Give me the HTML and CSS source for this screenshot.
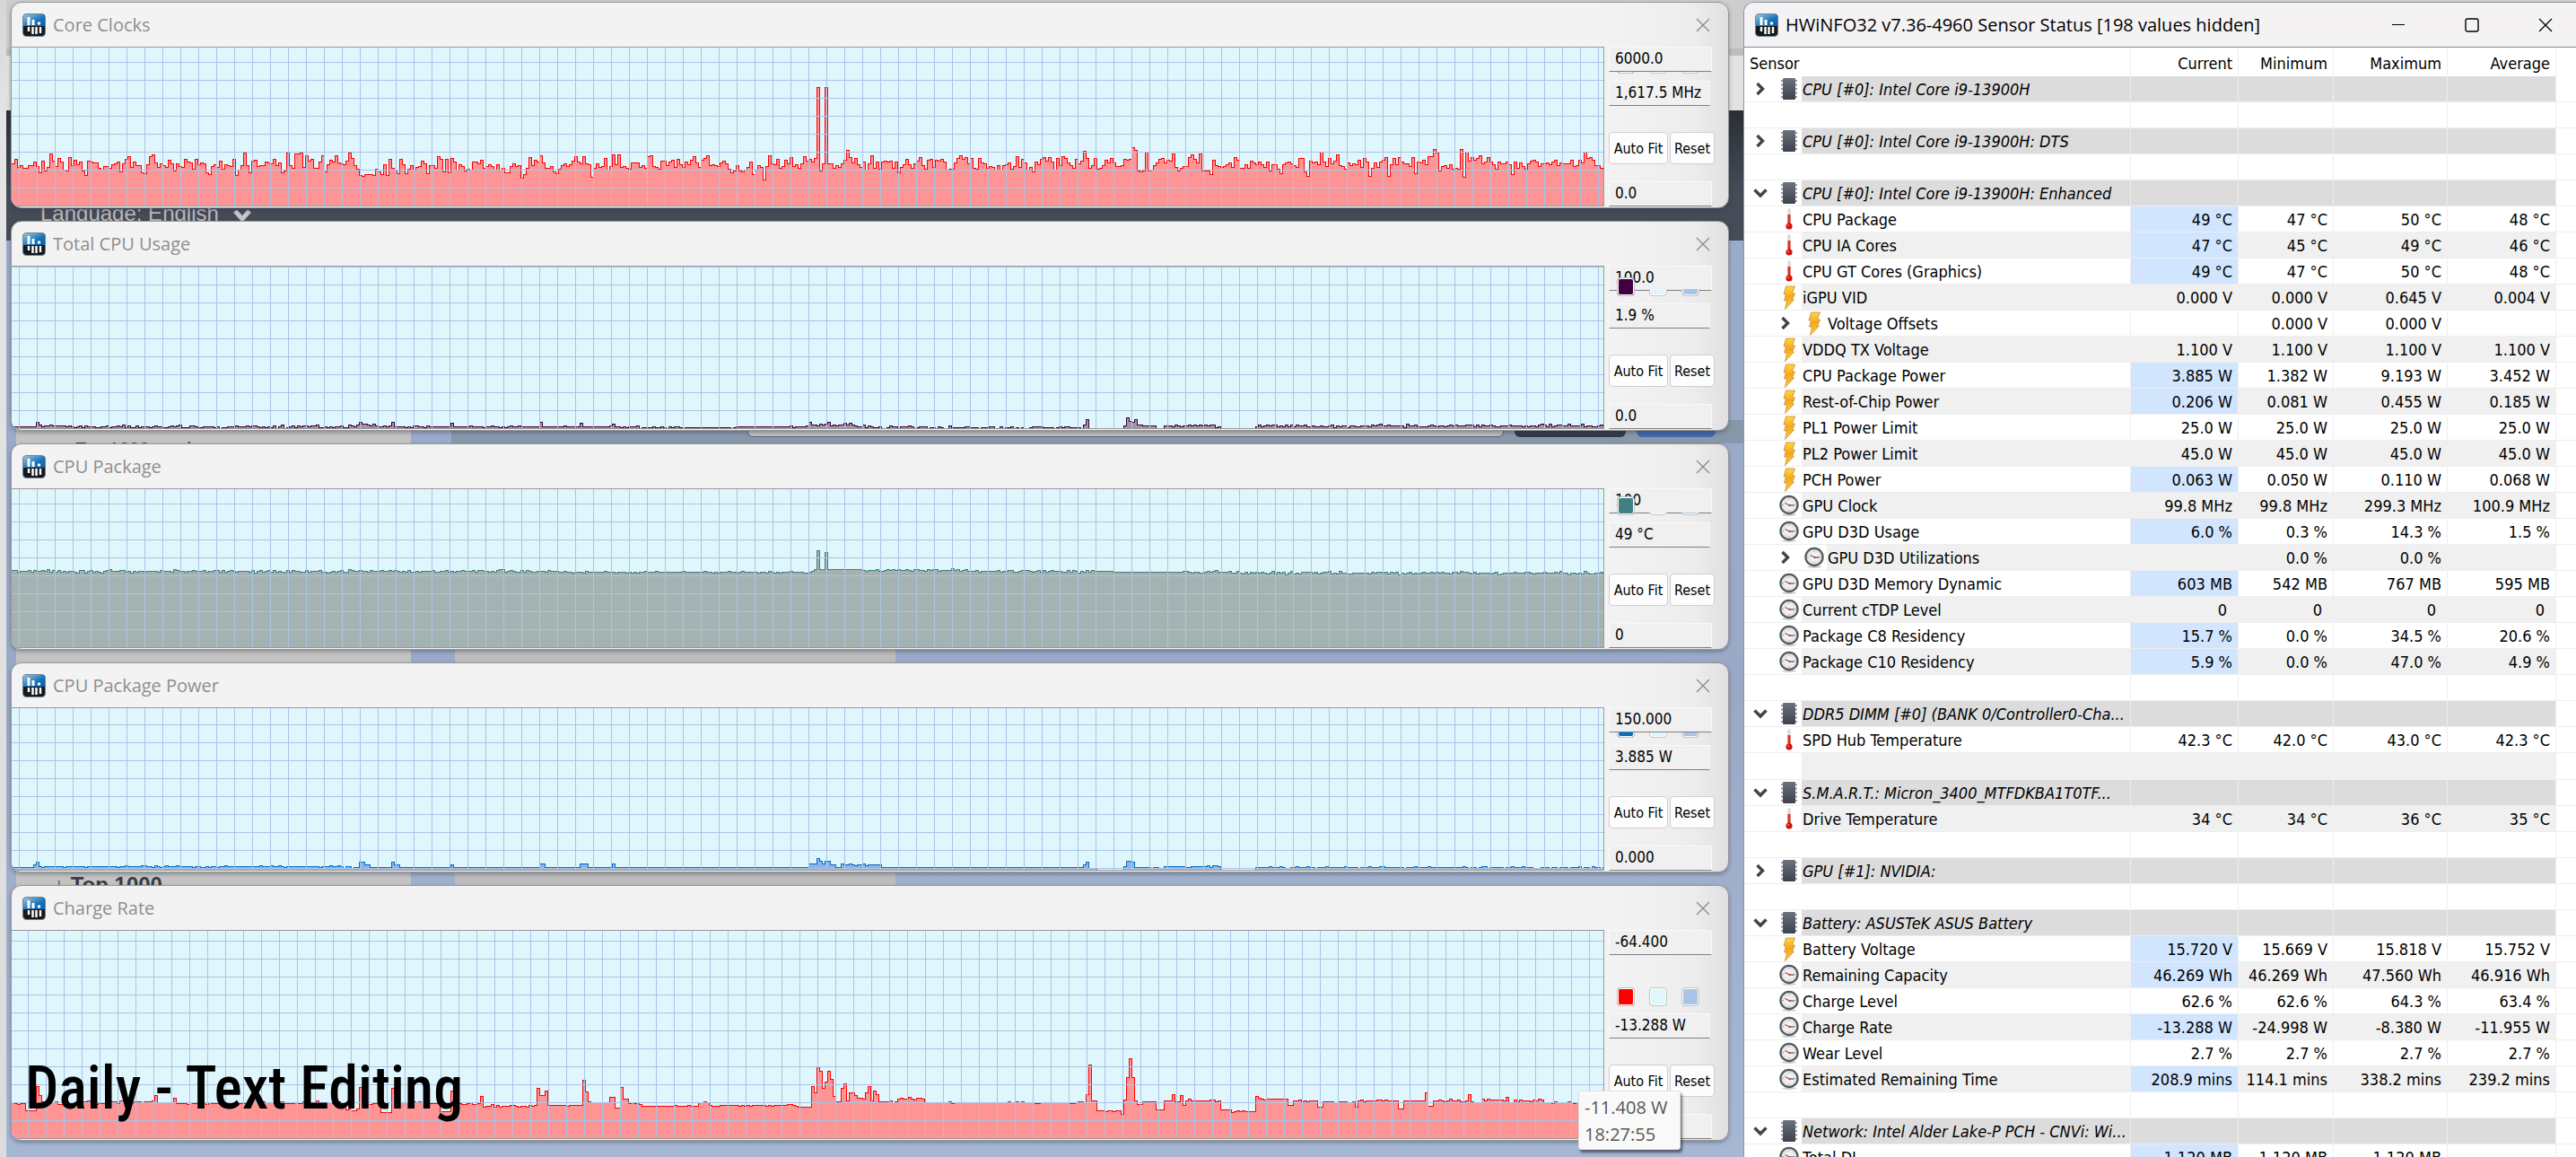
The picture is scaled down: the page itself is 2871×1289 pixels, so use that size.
FILE: index.html
```html
<!DOCTYPE html>
<html lang="en">
<head>
<meta charset="utf-8">
<title>HWiNFO32 Sensor Status</title>
<link rel="stylesheet" href="styles.css">
</head>
<body>
<svg class="sprite" aria-hidden="true">
  <defs>
    <linearGradient id="g-app" x1="0" y1="0" x2="1" y2="1"><stop offset="0" stop-color="#9fc6dc"/><stop offset=".6" stop-color="#1673bb"/><stop offset="1" stop-color="#0d5ea6"/></linearGradient>
    <linearGradient id="g-chip" x1="0" y1="0" x2="0" y2="1"><stop offset="0" stop-color="#6d737c"/><stop offset="1" stop-color="#3b424e"/></linearGradient>
    <linearGradient id="g-bolt" x1="0" y1="0" x2="0" y2="1"><stop offset="0" stop-color="#ffd83c"/><stop offset=".45" stop-color="#f5a71e"/><stop offset="1" stop-color="#ffd23a"/></linearGradient>
    <radialGradient id="g-clock"><stop offset="0" stop-color="#ffffff"/><stop offset="1" stop-color="#dcdcdc"/></radialGradient>
  </defs>
  <symbol id="app" viewBox="0 0 26 26">
    <rect x=".5" y=".5" width="25" height="25" rx="4" fill="#16181c" stroke="#6d8796"/>
    <path d="M1 14V4a3 3 0 0 1 3-3h18a3 3 0 0 1 3 3v10z" fill="url(#g-app)"/>
    <path d="M7 4v9M12 7v6" stroke="#fff" stroke-width="3"/>
    <circle cx="18.500" cy="11" r="1.800" fill="#fff"/>
    <path d="M7 15v5M11.500 15v8M15.500 15v8M20 15v7" stroke="#fff" stroke-width="2.400"/>
  </symbol>
  <symbol id="chip" viewBox="0 0 20 24">
    <path d="M1 3h18M1 7.500h18M1 12h18M1 16.500h18M1 21h18" stroke="#9a9da2" stroke-width="2"/>
    <rect x="3" y="0" width="14" height="24" rx="1" fill="url(#g-chip)"/>
  </symbol>
  <symbol id="therm" viewBox="0 0 8 25">
    <rect x="2" y="0" width="4" height="20" rx="2" fill="#dedede"/>
    <rect x="2.500" y="7" width="3" height="13" fill="#e03020"/>
    <circle cx="4" cy="20" r="3.600" fill="#d41208"/>
    <circle cx="3" cy="19" r="1" fill="#ff7766"/>
  </symbol>
  <symbol id="bolt" viewBox="0 0 15 27">
    <path d="M4 1h10l-3 8h3l-3 7h2L3 26.500 5 17H2l2-7H1.500z" fill="url(#g-bolt)" stroke="#c98a3c" stroke-width=".8"/>
  </symbol>
  <symbol id="clock" viewBox="0 0 22 24">
    <ellipse cx="11" cy="22.500" rx="8" ry="1.500" fill="#cfcfcf"/>
    <circle cx="11" cy="11.500" r="9.600" fill="url(#g-clock)" stroke="#55575b" stroke-width="2.200"/>
    <path d="M11 3.500v2M11 17.500v2M3 11.500h2M17 11.500h2" stroke="#aaa"/>
    <path d="M6.500 9.500l5 2.500h5" stroke="#6a6a6a" stroke-width="1.300" fill="none"/>
    <circle cx="11.500" cy="12" r="1.300" fill="#c8552b"/>
  </symbol>
  <symbol id="shut" viewBox="0 0 12 16"><path d="M2.500 2l6 6-6 6" fill="none" stroke="#3f444d" stroke-width="3.400"/></symbol>
  <symbol id="open" viewBox="0 0 16 12"><path d="M1.500 2.500l6.500 6.500 6.500-6.500" fill="none" stroke="#3f444d" stroke-width="3.400"/></symbol>
  <symbol id="x" viewBox="0 0 16 16"><path d="M1 1l14 14M15 1L1 15" fill="none" stroke="currentColor" stroke-width="1.300"/></symbol>
</svg>

<div class="desktop">
  <div class="backdrop" aria-hidden="true">
    <div class="edge"></div>
    <div class="page">
      <div class="tabs"></div>
      <div class="banner"><span>Language: English</span><svg viewBox="0 0 20 12"><path d="M2 1l8 9 8-9" fill="none" stroke="#c4c6ca" stroke-width="5"/></svg></div>
      <div class="board">
        <div class="card first"><span class="row-text">Top 1000 week</span><span class="row-text strong">↓ Top 1000</span></div>
        <div class="card second"></div>
        <div class="toolbar"><i class="bar"></i><i class="dark"></i><i class="blue"></i></div>
      </div>
    </div>
  </div>

  <main class="stack">
    <section class="win" data-series="clocks">
      <header><svg class="app"><use href="#app"/></svg><h2>Core Clocks</h2><button class="close" aria-label="Close"><svg><use href="#x"/></svg></button></header>
      <div class="body">
        <div class="chart h-s grid-a"><svg class="plot"></svg></div>
        <div class="side">
          <input class="field top" aria-label="Maximum" readonly value="6000.0">
          <div class="reading"><div class="swatches"><button class="sw red" aria-label="Line colour"></button><button class="sw pale" aria-label="Background colour"></button><button class="sw grid" aria-label="Grid colour"></button></div><input class="field now" aria-label="Current value" readonly value="1,617.5 MHz"></div>
          <div class="actions"><button>Auto Fit</button><button>Reset</button></div>
          <input class="field" aria-label="Minimum" readonly value="0.0">
        </div>
      </div>
    </section>
    <section class="win" data-series="usage">
      <header><svg class="app"><use href="#app"/></svg><h2>Total CPU Usage</h2><button class="close" aria-label="Close"><svg><use href="#x"/></svg></button></header>
      <div class="body">
        <div class="chart h-m grid-b"><svg class="plot"></svg></div>
        <div class="side">
          <input class="field top" aria-label="Maximum" readonly value="100.0">
          <div class="reading"><div class="swatches front"><button class="sw plum" aria-label="Line colour"></button><button class="sw pale" aria-label="Background colour"></button><button class="sw grid" aria-label="Grid colour"></button></div><input class="field now" aria-label="Current value" readonly value="1.9 %"></div>
          <div class="actions"><button>Auto Fit</button><button>Reset</button></div>
          <input class="field" aria-label="Minimum" readonly value="0.0">
        </div>
      </div>
    </section>
    <section class="win" data-series="temp">
      <header><svg class="app"><use href="#app"/></svg><h2>CPU Package</h2><button class="close" aria-label="Close"><svg><use href="#x"/></svg></button></header>
      <div class="body">
        <div class="chart h-s grid-a"><svg class="plot"></svg></div>
        <div class="side">
          <input class="field top" aria-label="Maximum" readonly value="100">
          <div class="reading"><div class="swatches front low"><button class="sw teal" aria-label="Line colour"></button><button class="sw pale" aria-label="Background colour"></button><button class="sw grid" aria-label="Grid colour"></button></div><input class="field now" aria-label="Current value" readonly value="49 °C"></div>
          <div class="actions"><button>Auto Fit</button><button>Reset</button></div>
          <input class="field" aria-label="Minimum" readonly value="0">
        </div>
      </div>
    </section>
    <section class="win" data-series="power">
      <header><svg class="app"><use href="#app"/></svg><h2>CPU Package Power</h2><button class="close" aria-label="Close"><svg><use href="#x"/></svg></button></header>
      <div class="body">
        <div class="chart h-m grid-c"><svg class="plot"></svg></div>
        <div class="side">
          <input class="field top" aria-label="Maximum" readonly value="150.000">
          <div class="reading"><div class="swatches"><button class="sw azure" aria-label="Line colour"></button><button class="sw pale" aria-label="Background colour"></button><button class="sw grid" aria-label="Grid colour"></button></div><input class="field now" aria-label="Current value" readonly value="3.885 W"></div>
          <div class="actions"><button>Auto Fit</button><button>Reset</button></div>
          <input class="field" aria-label="Minimum" readonly value="0.000">
        </div>
      </div>
    </section>
    <section class="win" data-series="charge">
      <header><svg class="app"><use href="#app"/></svg><h2>Charge Rate</h2><button class="close" aria-label="Close"><svg><use href="#x"/></svg></button></header>
      <div class="body">
        <div class="chart h-l grid-d"><svg class="plot"></svg></div>
        <div class="side">
          <input class="field top" aria-label="Maximum" readonly value="-64.400">
          <div class="reading"><div class="swatches"><button class="sw red" aria-label="Line colour"></button><button class="sw pale" aria-label="Background colour"></button><button class="sw grid" aria-label="Grid colour"></button></div><input class="field now" aria-label="Current value" readonly value="-13.288 W"></div>
          <div class="actions"><button>Auto Fit</button><button>Reset</button></div>
          <input class="field" aria-label="Minimum" readonly value="">
        </div>
      </div>
    </section>
    <div class="tip" role="tooltip">-11.408 W<br>18:27:55</div>
    <p class="caption">Daily - Text Editing</p>
  </main>

  <section class="sensors">
    <header><svg class="app"><use href="#app"/></svg><h1>HWiNFO32 v7.36-4960 Sensor Status [198 values hidden]</h1>
      <div class="controls">
        <button aria-label="Minimize"><svg viewBox="0 0 16 16"><path d="M1 7.500h14" stroke="currentColor"/></svg></button>
        <button aria-label="Maximize"><svg viewBox="0 0 16 16"><rect x="1" y="1" width="14" height="14" rx="2" fill="none" stroke="currentColor" stroke-width="1.400"/></svg></button>
        <button aria-label="Close"><svg><use href="#x"/></svg></button>
      </div>
    </header>
    <table>
      <colgroup><col><col class="c1"><col class="c2"><col class="c3"><col class="c4"><col class="c5"></colgroup>
      <thead><tr><th>Sensor</th><th>Current</th><th>Minimum</th><th>Maximum</th><th>Average</th><th class="end"></th></tr></thead>
      <tbody>
        <tr class="group"><th scope="row"><div class="tree"><button aria-label="Expand"><svg class="shut"><use href="#shut"/></svg></button><svg class="chip"><use href="#chip"/></svg><span>CPU [#0]: Intel Core i9-13900H</span></div></th><td></td><td></td><td></td><td></td><td class="end"></td></tr>
        <tr><th></th><td></td><td></td><td></td><td></td><td class="end"></td></tr>
        <tr class="group"><th scope="row"><div class="tree"><button aria-label="Expand"><svg class="shut"><use href="#shut"/></svg></button><svg class="chip"><use href="#chip"/></svg><span>CPU [#0]: Intel Core i9-13900H: DTS</span></div></th><td></td><td></td><td></td><td></td><td class="end"></td></tr>
        <tr><th></th><td></td><td></td><td></td><td></td><td class="end"></td></tr>
        <tr class="group"><th scope="row"><div class="tree"><button aria-label="Collapse"><svg class="open"><use href="#open"/></svg></button><svg class="chip"><use href="#chip"/></svg><span>CPU [#0]: Intel Core i9-13900H: Enhanced</span></div></th><td></td><td></td><td></td><td></td><td class="end"></td></tr>
        <tr><th scope="row"><div class="tree"><svg class="therm"><use href="#therm"/></svg><span>CPU Package</span></div></th><td class="hot">49 °C</td><td>47 °C</td><td>50 °C</td><td>48 °C</td><td class="end"></td></tr>
        <tr class="alt"><th scope="row"><div class="tree"><svg class="therm"><use href="#therm"/></svg><span>CPU IA Cores</span></div></th><td class="hot">47 °C</td><td>45 °C</td><td>49 °C</td><td>46 °C</td><td class="end"></td></tr>
        <tr><th scope="row"><div class="tree"><svg class="therm"><use href="#therm"/></svg><span>CPU GT Cores (Graphics)</span></div></th><td class="hot">49 °C</td><td>47 °C</td><td>50 °C</td><td>48 °C</td><td class="end"></td></tr>
        <tr class="alt"><th scope="row"><div class="tree"><svg class="bolt"><use href="#bolt"/></svg><span>iGPU VID</span></div></th><td>0.000 V</td><td>0.000 V</td><td>0.645 V</td><td>0.004 V</td><td class="end"></td></tr>
        <tr><th scope="row"><div class="tree nested"><button aria-label="Expand"><svg class="shut"><use href="#shut"/></svg></button><svg class="bolt"><use href="#bolt"/></svg><span>Voltage Offsets</span></div></th><td></td><td>0.000 V</td><td>0.000 V</td><td></td><td class="end"></td></tr>
        <tr class="alt"><th scope="row"><div class="tree"><svg class="bolt"><use href="#bolt"/></svg><span>VDDQ TX Voltage</span></div></th><td>1.100 V</td><td>1.100 V</td><td>1.100 V</td><td>1.100 V</td><td class="end"></td></tr>
        <tr><th scope="row"><div class="tree"><svg class="bolt"><use href="#bolt"/></svg><span>CPU Package Power</span></div></th><td class="hot">3.885 W</td><td>1.382 W</td><td>9.193 W</td><td>3.452 W</td><td class="end"></td></tr>
        <tr class="alt"><th scope="row"><div class="tree"><svg class="bolt"><use href="#bolt"/></svg><span>Rest-of-Chip Power</span></div></th><td class="hot">0.206 W</td><td>0.081 W</td><td>0.455 W</td><td>0.185 W</td><td class="end"></td></tr>
        <tr><th scope="row"><div class="tree"><svg class="bolt"><use href="#bolt"/></svg><span>PL1 Power Limit</span></div></th><td>25.0 W</td><td>25.0 W</td><td>25.0 W</td><td>25.0 W</td><td class="end"></td></tr>
        <tr class="alt"><th scope="row"><div class="tree"><svg class="bolt"><use href="#bolt"/></svg><span>PL2 Power Limit</span></div></th><td>45.0 W</td><td>45.0 W</td><td>45.0 W</td><td>45.0 W</td><td class="end"></td></tr>
        <tr><th scope="row"><div class="tree"><svg class="bolt"><use href="#bolt"/></svg><span>PCH Power</span></div></th><td class="hot">0.063 W</td><td>0.050 W</td><td>0.110 W</td><td>0.068 W</td><td class="end"></td></tr>
        <tr class="alt"><th scope="row"><div class="tree"><svg class="clock"><use href="#clock"/></svg><span>GPU Clock</span></div></th><td>99.8 MHz</td><td>99.8 MHz</td><td>299.3 MHz</td><td>100.9 MHz</td><td class="end"></td></tr>
        <tr><th scope="row"><div class="tree"><svg class="clock"><use href="#clock"/></svg><span>GPU D3D Usage</span></div></th><td class="hot">6.0 %</td><td>0.3 %</td><td>14.3 %</td><td>1.5 %</td><td class="end"></td></tr>
        <tr class="alt"><th scope="row"><div class="tree nested"><button aria-label="Expand"><svg class="shut"><use href="#shut"/></svg></button><svg class="clock"><use href="#clock"/></svg><span>GPU D3D Utilizations</span></div></th><td></td><td>0.0 %</td><td>0.0 %</td><td></td><td class="end"></td></tr>
        <tr><th scope="row"><div class="tree"><svg class="clock"><use href="#clock"/></svg><span>GPU D3D Memory Dynamic</span></div></th><td class="hot">603 MB</td><td>542 MB</td><td>767 MB</td><td>595 MB</td><td class="end"></td></tr>
        <tr class="alt unitless"><th scope="row"><div class="tree"><svg class="clock"><use href="#clock"/></svg><span>Current cTDP Level</span></div></th><td>0</td><td>0</td><td>0</td><td>0</td><td class="end"></td></tr>
        <tr><th scope="row"><div class="tree"><svg class="clock"><use href="#clock"/></svg><span>Package C8 Residency</span></div></th><td class="hot">15.7 %</td><td>0.0 %</td><td>34.5 %</td><td>20.6 %</td><td class="end"></td></tr>
        <tr class="alt"><th scope="row"><div class="tree"><svg class="clock"><use href="#clock"/></svg><span>Package C10 Residency</span></div></th><td class="hot">5.9 %</td><td>0.0 %</td><td>47.0 %</td><td>4.9 %</td><td class="end"></td></tr>
        <tr><th></th><td></td><td></td><td></td><td></td><td class="end"></td></tr>
        <tr class="group"><th scope="row"><div class="tree"><button aria-label="Collapse"><svg class="open"><use href="#open"/></svg></button><svg class="chip"><use href="#chip"/></svg><span>DDR5 DIMM [#0] (BANK 0/Controller0-Cha...</span></div></th><td></td><td></td><td></td><td></td><td class="end"></td></tr>
        <tr><th scope="row"><div class="tree"><svg class="therm"><use href="#therm"/></svg><span>SPD Hub Temperature</span></div></th><td>42.3 °C</td><td>42.0 °C</td><td>43.0 °C</td><td>42.3 °C</td><td class="end"></td></tr>
        <tr class="alt tall"><th><div class="tree"><span></span></div></th><td></td><td></td><td></td><td></td><td class="end"></td></tr>
        <tr class="group"><th scope="row"><div class="tree"><button aria-label="Collapse"><svg class="open"><use href="#open"/></svg></button><svg class="chip"><use href="#chip"/></svg><span>S.M.A.R.T.: Micron_3400_MTFDKBA1T0TF...</span></div></th><td></td><td></td><td></td><td></td><td class="end"></td></tr>
        <tr class="alt"><th scope="row"><div class="tree"><svg class="therm"><use href="#therm"/></svg><span>Drive Temperature</span></div></th><td>34 °C</td><td>34 °C</td><td>36 °C</td><td>35 °C</td><td class="end"></td></tr>
        <tr><th></th><td></td><td></td><td></td><td></td><td class="end"></td></tr>
        <tr class="group"><th scope="row"><div class="tree"><button aria-label="Expand"><svg class="shut"><use href="#shut"/></svg></button><svg class="chip"><use href="#chip"/></svg><span>GPU [#1]: NVIDIA:</span></div></th><td></td><td></td><td></td><td></td><td class="end"></td></tr>
        <tr><th></th><td></td><td></td><td></td><td></td><td class="end"></td></tr>
        <tr class="group"><th scope="row"><div class="tree"><button aria-label="Collapse"><svg class="open"><use href="#open"/></svg></button><svg class="chip"><use href="#chip"/></svg><span>Battery: ASUSTeK ASUS Battery</span></div></th><td></td><td></td><td></td><td></td><td class="end"></td></tr>
        <tr><th scope="row"><div class="tree"><svg class="bolt"><use href="#bolt"/></svg><span>Battery Voltage</span></div></th><td class="hot">15.720 V</td><td>15.669 V</td><td>15.818 V</td><td>15.752 V</td><td class="end"></td></tr>
        <tr class="alt"><th scope="row"><div class="tree"><svg class="clock"><use href="#clock"/></svg><span>Remaining Capacity</span></div></th><td class="hot">46.269 Wh</td><td>46.269 Wh</td><td>47.560 Wh</td><td>46.916 Wh</td><td class="end"></td></tr>
        <tr><th scope="row"><div class="tree"><svg class="clock"><use href="#clock"/></svg><span>Charge Level</span></div></th><td>62.6 %</td><td>62.6 %</td><td>64.3 %</td><td>63.4 %</td><td class="end"></td></tr>
        <tr class="alt"><th scope="row"><div class="tree"><svg class="clock"><use href="#clock"/></svg><span>Charge Rate</span></div></th><td class="hot">-13.288 W</td><td>-24.998 W</td><td>-8.380 W</td><td>-11.955 W</td><td class="end"></td></tr>
        <tr><th scope="row"><div class="tree"><svg class="clock"><use href="#clock"/></svg><span>Wear Level</span></div></th><td>2.7 %</td><td>2.7 %</td><td>2.7 %</td><td>2.7 %</td><td class="end"></td></tr>
        <tr class="alt"><th scope="row"><div class="tree"><svg class="clock"><use href="#clock"/></svg><span>Estimated Remaining Time</span></div></th><td class="hot">208.9 mins</td><td>114.1 mins</td><td>338.2 mins</td><td>239.2 mins</td><td class="end"></td></tr>
        <tr><th></th><td></td><td></td><td></td><td></td><td class="end"></td></tr>
        <tr class="group"><th scope="row"><div class="tree"><button aria-label="Collapse"><svg class="open"><use href="#open"/></svg></button><svg class="chip"><use href="#chip"/></svg><span>Network: Intel Alder Lake-P PCH - CNVi: Wi...</span></div></th><td></td><td></td><td></td><td></td><td class="end"></td></tr>
        <tr><th scope="row"><div class="tree"><svg class="clock"><use href="#clock"/></svg><span>Total DL</span></div></th><td class="hot">1,120 MB</td><td>1,120 MB</td><td>1,120 MB</td><td></td><td class="end"></td></tr>
      </tbody>
    </table>
  </section>
</div>
<script src="charts.js"></script>
</body>
</html>
```
FILE: styles.css
```css
* { box-sizing: border-box; }
body {
  margin: 0;
  font-family: "DejaVu Sans Condensed", "Noto Sans", sans-serif;
  font-size: 18px;
  color: #000;
}
button { margin: 0; padding: 0; border: 0; background: none; font: inherit; color: inherit; }
h1, h2, p { margin: 0; font-weight: 400; }
.sprite { position: absolute; width: 0; height: 0; }

.desktop {
  position: relative;
  display: grid;
  grid-template-columns: minmax(0, 1fr) 928px;
  gap: 16px;
  height: 100vh;
  padding: 2px 0 0 12px;
  overflow: hidden;
  background: #b4b4b4;
}

/* the browser window that sits behind everything */
.backdrop { position: absolute; inset: 0; display: flex; }
.edge { width: 7px; background: linear-gradient(#d6d6d6, #e4e4e4 10%, #dcdcdc); }
.page { flex: 1; display: flex; flex-direction: column; }
.tabs { height: 123px; background: linear-gradient(#cdcdcd 0 54px, #bcbcbc 54px 62px, #e2e2e2 62px); }
.banner {
  height: 145px;
  display: flex;
  align-items: flex-end;
  gap: 16px;
  padding: 0 0 16px 38px;
  background: linear-gradient(#2a2f36, #454b57 60%, #454b57);
  font: 24px/28px "Liberation Sans", sans-serif;
  color: #b9bbbf;
}
.banner svg { width: 20px; height: 12px; margin-bottom: 6px; }
.board {
  flex: 1;
  position: relative;
  display: grid;
  grid-template-columns: 440px 491px;
  column-gap: 49px;
  padding-left: 11px;
  background: linear-gradient(#9babca, #9aa9c6 50%, #a6b7d4);
}
.card { height: 740px; background: #c3c3c3; }
.card.second { background: #bcbcbc; }
.card.first { display: flex; flex-direction: column; padding: 219px 0 0 66px; gap: 460px; }
.row-text { font: 20px/26px "Liberation Sans", sans-serif; color: #3a3d44; }
.row-text.strong { margin-left: -24px; font-size: 24px; font-weight: 700; }
.toolbar { position: absolute; left: 496px; right: 0; top: 200px; height: 26px; padding: 0 959px 0 330px; background: #8797aa; display: flex; gap: 12px; }
.toolbar i { height: 19px; border-radius: 0 0 6px 6px; }
.toolbar .bar { flex: 1; background: #c0c0c0; border: 1px solid #596372; }
.toolbar .dark { width: 124px; background: #343a44; }
.toolbar .blue { width: 88px; background: #4169ad; }

/* graph windows */
.stack { position: relative; display: flex; flex-direction: column; gap: 14px; }
.win {
  border: 1px solid #979797;
  border-radius: 12px;
  overflow: hidden;
  background: linear-gradient(to right, #f3f3f3 calc(100% - 140px), #ededed calc(100% - 40px), #e0e0e0);
  box-shadow: 0 2px 4px rgba(40, 50, 70, .4);
}
.win header, .sensors header { display: flex; align-items: center; gap: 8px; height: 49px; padding: 0 20px 0 12px; }
.app { width: 26px; height: 26px; flex: none; }
h1, h2 { flex: 1; font: 20px/28px "Open Sans", "Noto Sans", sans-serif; }
h2 { color: #8e8e8e; }
.close { width: 16px; height: 16px; color: #8a8a8a; }
.close svg { width: 16px; height: 16px; display: block; }
.body { display: flex; padding-bottom: 1px; }
.chart { position: relative; flex: 1; border: 1px solid #9a9a9a; border-left: 0; background: #e0f6fd; }
.h-s { height: 178px; }
.h-m { height: 182px; }
.h-l { height: 233px; }
.plot { display: block; width: 100%; height: 100%; }
.chart::after {
  content: "";
  position: absolute;
  inset: 0;
  background-image: linear-gradient(#a9c4e6 1px, transparent 1px), linear-gradient(to right, #a9c4e6 1px, transparent 1px);
  background-size: 20px 20px;
}
.grid-a::after { background-position: 8px 16px; }
.grid-b::after { background-position: 8px 0; }
.grid-c::after { background-position: 8px 18px; }
.grid-d::after { background-position: 18px 11px; }

.side { width: 138px; display: flex; flex-direction: column; padding: 0 15px 0 5px; }
.field {
  display: block;
  width: 115px;
  height: 28px;
  padding: 0 6px 2px;
  border: 1px solid #f9f9f9;
  border-bottom-color: #7f7f7f;
  background: #f0f0f0;
  font: 17px/24px "DejaVu Sans Condensed", "Noto Sans", sans-serif;
  color: #000;
}
.field.top { position: relative; z-index: 1; }
.field.now { width: 113px; }
.reading { position: relative; margin-top: auto; }
.swatches { position: absolute; bottom: 100%; left: 9px; display: flex; gap: 16px; padding-bottom: 8px; }
.sw { width: 20px; height: 21px; border: 1px solid #c4c4c4; border-radius: 4px; box-shadow: inset 0 0 0 1px #fff; }
.red { background: #f00; }
.plum { background: #400040; }
.teal { background: #408080; }
.azure { background: #0070c0; }
.pale { background: #e0f6fd; }
.sw.grid { background: #a9c4e6; }
.front { z-index: 2; }
.front .pale, .front .grid { clip-path: inset(13px 0 0 0); }
.low .pale, .low .grid { clip-path: inset(18px 0 0 0); }
.actions { display: flex; gap: 2px; margin: 29px 0 19px; }
.actions button {
  width: 50px;
  height: 36px;
  border: 1px solid #cfcfcf;
  border-radius: 4px;
  background: #fdfdfd;
  font-size: 16px;
  white-space: nowrap;
}
.actions button:first-child { width: 66px; }

.tip {
  position: absolute;
  z-index: 3;
  right: 54px;
  bottom: 8px;
  width: 114px;
  padding: 3px 6px 1px;
  border: 1px solid #e2e2e2;
  border-radius: 3px;
  background: #f9f9f9;
  box-shadow: 2px 3px 3px rgba(0, 0, 0, .5);
  font: 20px/30px "Open Sans", "Noto Sans", sans-serif;
  color: #575757;
}
.caption {
  position: absolute;
  z-index: 3;
  left: 16px;
  bottom: 36px;
  font: 500 66px/80px "Roboto Condensed", "Liberation Sans Narrow", "Open Sans Condensed", sans-serif;
  white-space: nowrap;
}

/* sensor list */
.sensors {
  position: relative;
  border: 1px solid #8b93a3;
  border-width: 1px 0 0 1px;
  border-radius: 12px 0 0 0;
  overflow: hidden;
  background: #fff;
}
.sensors header { height: 50px; padding-right: 26px; background: #f5f2f4; border-bottom: 1px solid #7d8799; }
.controls { display: flex; gap: 66px; }
.controls button, .controls svg { display: block; width: 16px; height: 16px; }
table { width: 100%; table-layout: fixed; border-collapse: separate; border-spacing: 0; }
.c1 { width: 120px; }
.c2 { width: 106px; }
.c3 { width: 127px; }
.c4 { width: 121px; }
.c5 { width: 22px; }
th, td {
  height: 29px;
  padding: 0;
  border: 1px solid #eee;
  border-width: 0 1px 1px 0;
  font-weight: 400;
  line-height: 28px;
  white-space: nowrap;
  text-align: left;
}
td, thead th + th { text-align: right; padding-right: 6px; }
tbody td { padding-top: 2px; line-height: 26px; }
thead th { height: 32px; padding-top: 4px; line-height: 28px; border-bottom: 0; }
thead th:first-child { padding-left: 6px; }
th.end, td.end { border-right: 0; background: #fff; }
.tree { display: flex; align-items: center; height: 28px; padding-left: 36px; }
.tree button { display: flex; justify-content: center; width: 36px; margin-left: -36px; }
.tree.nested { padding-left: 64px; }
.tree span { flex: 1; height: 28px; padding: 2px 0 0 1px; line-height: 26px; }
.chip { width: 20px; height: 24px; margin: 0 4px; }
.therm { width: 8px; height: 25px; margin: 0 10px; }
.bolt { width: 16px; height: 27px; margin: 0 6px; }
.clock { width: 22px; height: 24px; margin: 0 3px; }
.tree svg { flex: none; }
.shut { width: 12px; height: 16px; }
.open { width: 16px; height: 12px; }
.group td:not(.end), .group span { background: #dcdcdc; }
.group span { font-style: italic; }
.alt td:not(.end), .alt span { background: #f0f0f0; }
.alt td:not(.end), .alt th { border-right-color: #f0f0f0; }
.alt.tall th, .alt.tall td { height: 30px; }
.tall .tree { height: 29px; padding-left: 64px; }
.tall .tree span { height: 29px; }
tr td.hot, tr.alt td.hot { background: #d1e5ff; }
.unitless td { padding-right: 12px; }
```
FILE: charts.js
```js
// Each run is [x, level, jitter]; a run lasts until the next one begins.
const STEP = 3;
const series = {
  clocks: { line: '#f00', fill: '#ff9494', left: 13, top: 53, seed: 7, runs: [
    [13,183,12],[55,171,0],[58,183,12],[94,195,0],[97,183,12],[269,170,0],[272,183,12],[317,170,0],[320,180,11],[349,182,12],[400,194,2],[418,184,12],
    [580,198,0],[583,184,12],[656,197,0],[659,184,10],[682,172,0],[685,183,0],[686,172,0],[689,181,10],[790,186,11],[850,200,0],[853,180,10],[900,178,3],
    [908,97,0],[911,190,0],[914,182,0],[917,97,0],[920,182,6],[941,167,0],[944,182,11],[1207,168,0],[1210,184,10],[1250,177,1],[1259,164,0],[1262,167,0],
    [1265,186,10],[1274,169,0],[1277,182,12],[1346,194,0],[1349,184,11],[1454,196,0],[1457,181,5],[1470,169,0],[1473,180,10],[1523,196,0],[1526,182,9],
    [1544,196,0],[1547,181,9],[1574,193,0],[1577,178,8],[1595,166,0],[1598,170,0],[1601,183,8],[1625,166,0],[1628,197,0],[1631,169,0],[1634,180,9],
    [1682,194,0],[1685,182,9],[1763,169,0],[1766,178,6],[1775,183,8]] },
  usage: { line: '#400040', fill: '#a494a8', left: 13, top: 297, seed: 3, runs: [
    [13,475,0],[38,470,0],[41,474,2],[75,475,2],[399,470,0],[402,473,2],[420,475,2],[434,470,0],[437,475,1],[501,471,0],[504,475,1],[599,470,0],[602,475,1],
    [644,471,0],[647,475,1],[681,472,0],[684,475,1],[710,476,1],[820,475,1],[901,470,0],[904,473,2],[922,470,0],[925,474,1],[936,472,2],[947,474,2],[975,476,2],
    [1207,473,0],[1210,467,0],[1213,477,0],[1251,474,0],[1253,465,0],[1256,469,0],[1259,470,0],[1262,467,0],[1265,474,1],[1288,477,0],[1295,474,2],[1360,477,0],[1399,474,2]] },
  temp: { line: '#408080', fill: '#a4b2b1', left: 13, top: 545, seed: 11, runs: [
    [13,636,2],[400,636,2],[620,637,1],[907,634,0],[908,613,0],[911,634,0],[917,615,0],[920,634,0],[960,635,2],[1080,636,2],[1240,637,0],[1310,637,2],[1370,638,2]] },
  power: { line: '#0070c0', fill: '#92b0ee', left: 13, top: 789, seed: 5, runs: [
    [13,966,0],[36,963,0],[40,960,0],[43,965,1],[150,965,1],[380,966,1],[400,960,0],[404,963,0],[412,966,0],[434,960,0],[437,963,0],[443,966,0],[500,963,0],[504,966,0],
    [599,962,0],[607,966,0],[645,962,0],[653,966,0],[681,962,0],[684,966,0],[900,962,0],[908,956,0],[911,959,0],[914,962,0],[918,959,0],[923,963,0],[930,966,0],[937,963,1],[982,966,0],
    [1206,963,0],[1210,960,0],[1213,967,0],[1220,969,0],[1251,965,0],[1254,959,0],[1260,960,0],[1264,966,1],[1290,967,0],[1296,965,1],[1360,969,0],[1399,966,1]] },
  charge: { line: '#f00', fill: '#ff9494', left: 13, top: 1036, seed: 9, runs: [
    [13,1228,1],[28,1236,0],[40,1209,0],[43,1219,0],[46,1227,3],[120,1226,2],[172,1219,0],[175,1227,1],[193,1222,0],[196,1228,1],[280,1221,0],[285,1227,2],[384,1235,1],
    [400,1210,0],[403,1228,1],[424,1238,0],[434,1211,0],[437,1216,0],[440,1227,2],[490,1237,0],[500,1214,0],[503,1230,0],[506,1218,0],[509,1229,2],[533,1220,0],[536,1231,2],
    [598,1211,0],[601,1219,0],[606,1214,0],[609,1230,1],[647,1202,0],[650,1215,0],[653,1227,1],[678,1221,0],[683,1233,0],[689,1210,0],[692,1223,0],[698,1228,2],[715,1231,1],
    [776,1227,1],[790,1230,1],[888,1232,1],[902,1209,0],[905,1216,0],[908,1187,0],[911,1192,0],[914,1211,0],[917,1204,0],[920,1192,0],[923,1201,0],[926,1220,0],[929,1226,0],
    [935,1211,0],[938,1206,0],[941,1225,0],[944,1216,0],[950,1219,0],[953,1222,1],[962,1216,0],[965,1209,0],[968,1225,0],[971,1214,0],[974,1218,0],[977,1226,1],[1000,1223,2],
    [1030,1227,1],[1208,1218,0],[1211,1185,0],[1214,1225,0],[1220,1236,1],[1247,1240,0],[1250,1224,0],[1253,1199,0],[1256,1178,0],[1259,1199,0],[1264,1225,0],[1267,1229,0],[1271,1226,1],
    [1288,1235,0],[1295,1225,1],[1304,1218,0],[1307,1226,0],[1313,1219,0],[1316,1230,0],[1319,1225,2],[1360,1235,0],[1370,1237,1],[1399,1220,0],[1402,1223,1],[1435,1230,0],
    [1440,1225,2],[1468,1232,0],[1472,1226,1],[1508,1232,0],[1512,1225,1],[1558,1234,0],[1562,1225,1],[1586,1216,0],[1589,1231,0],[1595,1225,2],[1634,1218,0],[1637,1227,1],
    [1650,1224,1],[1676,1221,0],[1679,1225,2],[1720,1227,1]] }
};

document.querySelectorAll('[data-series]').forEach(win => {
  const { line, fill, left, top, seed, runs } = series[win.dataset.series];
  const svg = win.querySelector('.plot');
  const height = svg.clientHeight;
  const width = 1774;
  let state = seed;
  const random = () => (state = (state * 16807) % 2147483647) / 2147483647;
  let run = 0, d = '';
  for (let x = left; x < left + width; x += STEP) {
    while (run + 1 < runs.length && runs[run + 1][0] <= x) run++;
    const [, level, jitter] = runs[run];
    const noise = Math.round((random() + random() - 1) * jitter);
    const y = level + noise - top + 0.5;
    d += `${d ? 'V' : 'M0 '}${y}H${x - left + STEP + 0.5}`;
  }
  svg.setAttribute('viewBox', `0 0 ${width} ${height}`);
  svg.setAttribute('preserveAspectRatio', 'none');
  svg.innerHTML = `<path d="${d}V${height}H0z" fill="${fill}" shape-rendering="crispEdges"/>` +
    `<path d="${d}" fill="none" stroke="${line}" shape-rendering="crispEdges"/>`;
});
```
